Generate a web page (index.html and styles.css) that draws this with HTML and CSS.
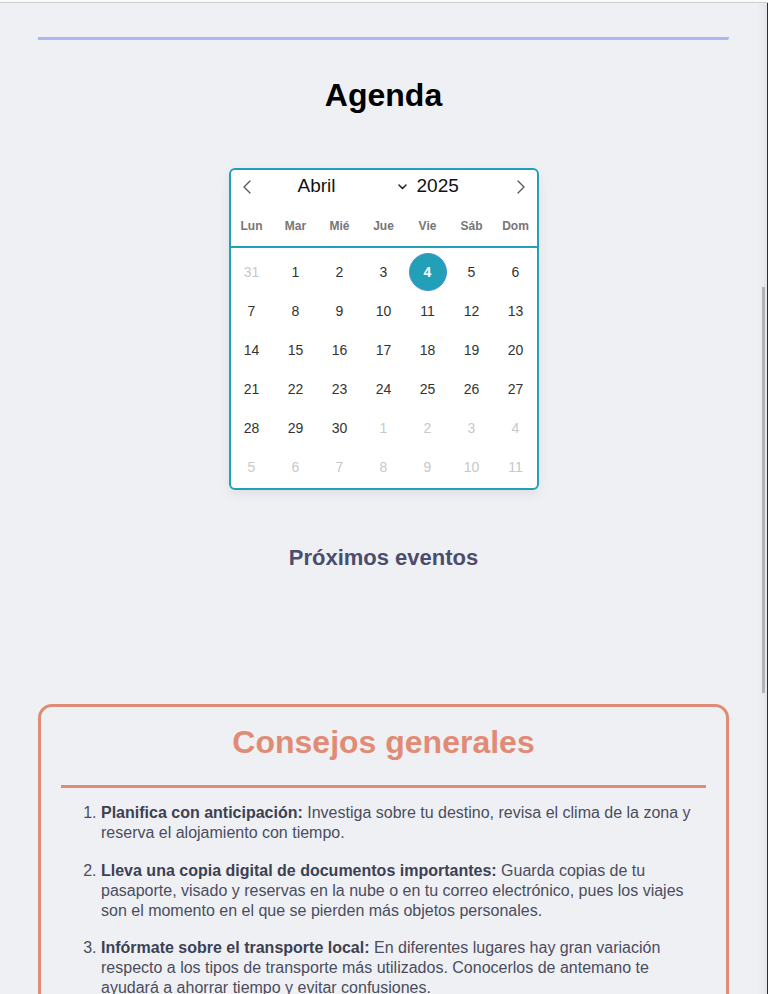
FILE: index.html
```html
<!DOCTYPE html>
<html lang="es">
  <head>
    <meta charset="UTF-8" />
    <meta name="viewport" content="width=device-width, initial-scale=1.0" />
    <title>Agenda</title>
    <link rel="stylesheet" href="styles.css">
  </head>
  <body>
    <div class="topline"></div>

    <main class="page">
      <div class="header-line"></div>

      <h1>Agenda</h1>

      <div class="calendar">
        <div class="cal-head">
          <button class="nav-btn" aria-label="Mes anterior">
            <svg width="8" height="14" viewBox="0 0 8 14" fill="none" stroke="#555" stroke-width="1.3" stroke-linecap="round" stroke-linejoin="round">
              <polyline points="7,1 1,7 7,13"></polyline>
            </svg>
          </button>
          <div class="month-select">
            <span>Abril</span>
            <svg width="9" height="6" viewBox="0 0 9 6" fill="none" stroke="#222" stroke-width="1.5" stroke-linecap="round" stroke-linejoin="round">
              <polyline points="1,1 4.5,4.5 8,1"></polyline>
            </svg>
          </div>
          <div class="year">2025</div>
          <button class="nav-btn" aria-label="Mes siguiente">
            <svg width="8" height="14" viewBox="0 0 8 14" fill="none" stroke="#555" stroke-width="1.3" stroke-linecap="round" stroke-linejoin="round">
              <polyline points="1,1 7,7 1,13"></polyline>
            </svg>
          </button>
        </div>

        <div class="weekdays">
          <span>Lun</span>
          <span>Mar</span>
          <span>Mié</span>
          <span>Jue</span>
          <span>Vie</span>
          <span>Sáb</span>
          <span>Dom</span>
        </div>

        <div class="days" id="days"></div>
      </div>

      <h2 class="events-title">Próximos eventos</h2>
      <div class="events" id="events"></div>

      <section class="tips">
        <h2>Consejos generales</h2>
        <hr />
        <ol>
          <li>
            <strong>Planifica con anticipación:</strong> Investiga sobre tu
            destino, revisa el clima de la zona y reserva el alojamiento con
            tiempo.
          </li>
          <li>
            <strong>Lleva una copia digital de documentos importantes:</strong>
            Guarda copias de tu pasaporte, visado y reservas en la nube o en tu
            correo electrónico, pues los viajes son el momento en el que se
            pierden más objetos personales.
          </li>
          <li>
            <strong>Infórmate sobre el transporte local:</strong> En diferentes
            lugares hay gran variación respecto a los tipos de transporte más
            utilizados. Conocerlos de antemano te ayudará a ahorrar tiempo y
            evitar confusiones.
          </li>
          <li>
            <strong>Aprende algunas frases básicas:</strong> Saber saludar,
            agradecer y pedir ayuda en el idioma local facilita mucho el viaje.
          </li>
        </ol>
      </section>
    </main>

    <div class="edge"><div class="thumb"></div></div>

    <script>
      // April 2025, weeks start on Monday
      const year = 2025;
      const month = 3;
      const selected = 4;

      function buildDays() {
        const container = document.getElementById("days");
        const first = new Date(year, month, 1);
        const offset = (first.getDay() + 6) % 7;
        const start = new Date(year, month, 1 - offset);

        for (let i = 0; i < 42; i++) {
          const d = new Date(start);
          d.setDate(start.getDate() + i);

          const cell = document.createElement("div");
          cell.className = "day";
          const num = document.createElement("span");
          num.textContent = d.getDate();

          if (d.getMonth() !== month) {
            cell.classList.add("outside");
          } else if (d.getDate() === selected) {
            cell.classList.add("selected");
          }

          cell.appendChild(num);
          container.appendChild(cell);
        }
      }

      buildDays();
    </script>
  </body>
</html>
```

FILE: styles.css
```css
:root {
  --bg: #eff0f4;
  --teal: #22a0b8;
  --salmon: #e08b76;
  --periwinkle: #adb6f5;
  --text: #4a4d5e;
}

* {
  margin: 0;
  padding: 0;
  box-sizing: border-box;
}

body {
  background-color: var(--bg);
  font-family: "Liberation Sans", Arial, sans-serif;
  color: #222;
}

.topline {
  height: 3px;
  background-color: #fafafa;
  border-bottom: 1px solid #cdcdcd;
}

.page {
  margin: 0 39px 0 38px;
}

.header-line {
  margin-top: 34px;
  height: 3px;
  background-color: var(--periwinkle);
  border-radius: 0 0 2px 0;
}

h1 {
  margin-top: 37px;
  font-size: 32px;
  line-height: 37px;
  text-align: center;
  color: #000;
}

/* calendar */

.calendar {
  width: 310px;
  margin: 54px auto 0;
  background-color: white;
  border: 2px solid var(--teal);
  border-radius: 6px;
  box-shadow: 0 4px 12px rgba(0, 0, 0, 0.07);
}

.cal-head {
  display: flex;
  align-items: center;
  height: 33px;
}

.nav-btn {
  width: 32px;
  height: 33px;
  display: flex;
  align-items: center;
  justify-content: center;
  background: none;
  border: none;
  cursor: pointer;
}

.month-select {
  width: 148px;
  display: flex;
  align-items: center;
  justify-content: space-between;
  padding: 0 4px 2px 35px;
  font-size: 19px;
  color: #111;
}

.month-select svg {
  margin-top: 3px;
}

.year {
  flex: 1;
  margin-left: 6px;
  padding-bottom: 2px;
  font-size: 19px;
  color: #111;
}

.weekdays {
  display: grid;
  grid-template-columns: repeat(7, 44px);
  justify-content: center;
  height: 45px;
  align-items: center;
  padding-top: 2px;
  font-size: 12px;
  font-weight: bold;
  color: #767676;
  text-align: center;
  border-bottom: 2px solid var(--teal);
}

.days {
  display: grid;
  grid-template-columns: repeat(7, 44px);
  grid-auto-rows: 39px;
  justify-content: center;
  padding: 4px 0 2px;
}

.day {
  display: flex;
  align-items: center;
  justify-content: center;
  font-size: 14px;
  color: #333;
}

.day span {
  width: 38px;
  height: 38px;
  display: flex;
  align-items: center;
  justify-content: center;
  border-radius: 50%;
}

.day.outside {
  color: #c8c8c8;
}

.day.selected span {
  background-color: var(--teal);
  border: 1px solid #4a8fd6;
  color: white;
  font-weight: bold;
}

/* events */

.events-title {
  margin-top: 55px;
  font-size: 22px;
  text-align: center;
  color: #4a4d6c;
}

.events {
  min-height: 133px;
}

/* tips */

.tips {
  border: 3px solid var(--salmon);
  border-radius: 14px;
  padding: 17px 20px 20px;
}

.tips h2 {
  font-size: 32px;
  line-height: 37px;
  text-align: center;
  color: var(--salmon);
}

.tips hr {
  margin-top: 24px;
  border: none;
  height: 3px;
  background-color: var(--salmon);
}

.tips ol {
  margin-top: 15px;
  padding-left: 40px;
  font-size: 16px;
  line-height: 20px;
  color: var(--text);
}

.tips li {
  margin-bottom: 17.5px;
}

.tips strong {
  color: #3d4152;
}

/* right edge of the window */

.edge {
  position: fixed;
  top: 3px;
  right: 0;
  bottom: 0;
  width: 12px;
  background: linear-gradient(to right, rgba(0, 0, 0, 0), rgba(0, 0, 0, 0.04));
  border-right: 1px solid #3b2240;
}

.thumb {
  position: absolute;
  top: 284px;
  right: 2px;
  width: 3px;
  height: 406px;
  background-color: #b3b3b3;
}
```
